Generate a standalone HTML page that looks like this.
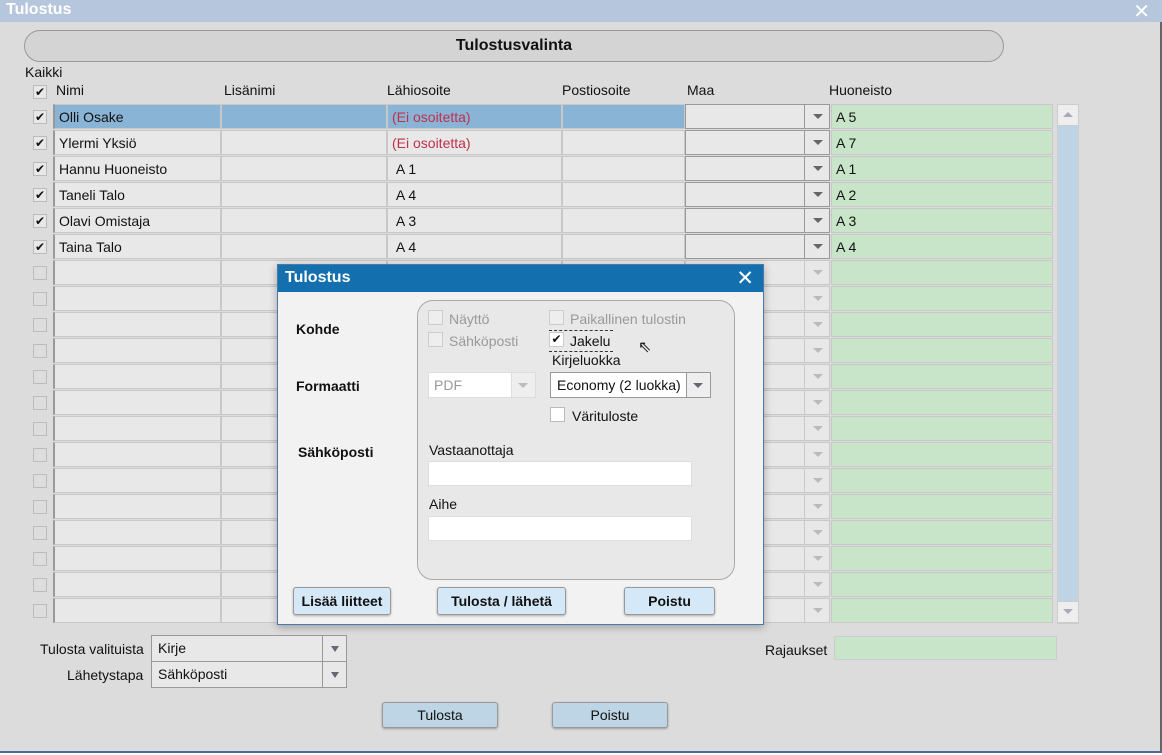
<!DOCTYPE html>
<html><head><meta charset="utf-8"><style>
*{box-sizing:border-box;margin:0;padding:0}
body{width:1162px;height:755px;overflow:hidden;background:#dcdcdc;font-family:"Liberation Sans",sans-serif;font-size:14px;color:#111;position:relative}
.a{position:absolute}
.tb{left:0;top:0;width:1162px;height:22px;background:#b6c6dc;color:#fff;font-weight:bold;font-size:16px;padding:0 6px;line-height:20px}
.r{position:absolute;left:0;width:1160px;height:26px}
.c{position:absolute;top:0;height:25px;background:#e8e8e8;border:1px solid #c8c8c8;line-height:25px;padding-left:4px;white-space:nowrap}
.n{left:53px;width:168px;border-left:2px solid #999}
.l{left:221px;width:166px}
.h{left:387px;width:175px}
.p{left:562px;width:123px}
.m{left:685px;width:145px;border:1px solid #999}
.m:after{content:"";position:absolute;right:0;top:0;width:24px;height:23px;border-left:1px solid #999}
.m i{position:absolute;right:6px;top:9px;border-left:5px solid transparent;border-right:5px solid transparent;border-top:5px solid #666;z-index:2}
.u{left:831px;width:222px;background:#c9e5c9;border-color:#c8c8c8}
.cb{position:absolute;left:33px;top:6px;width:14px;height:14px;border:1px solid #bbb;background:#e8e8e8;font-size:12px;line-height:12px;text-align:center}
.red{color:#c0304a}
.sel{background:#8ab4d6}
.e .m{border-color:#c8c8c8}.e .m:after{border-color:#c8c8c8}.e .m i{border-top-color:#bbb}
.e .cb{background:#ddd}
.btn{position:absolute;border:1px solid #999;border-radius:3px;text-align:center;box-shadow:0 1px 2px rgba(0,0,0,.3)}
.dlg{left:277px;top:264px;width:487px;height:361px;background:#f2f2f2;border:1px solid #4b79a9;box-shadow:0 2px 8px rgba(0,0,0,.3)}
.dh{left:0;top:0;width:485px;height:27px;background:#136fae;color:#fff;font-weight:bold;font-size:16px;padding-left:7px;line-height:26px}
.lb{font-weight:bold;font-size:14px}
.dcb{position:absolute;width:15px;height:15px;border:1px solid #ccc;background:#eee}
.gray{color:#999}
.inp{position:absolute;background:#fff;border:1px solid #ddd}
.db{background:#d5e8f8;font-weight:bold;font-size:14px;line-height:26px;height:28px}
</style></head><body>
<div class="a tb">Tulostus</div>
<div class="a" style="right:12px;top:-1px;color:#fff;font-size:20px">✕</div>
<div class="a" style="left:1160px;top:22px;width:2px;height:733px;background:#666"></div>
<div class="a" style="left:0;top:751px;width:1162px;height:4px;background:#fff;border-top:2px solid #4a6a9a"></div>
<div class="a" style="left:24px;top:30px;width:980px;height:32px;border:1px solid #999;border-radius:16px;background:#d4d4d4;text-align:center;font-weight:bold;font-size:16px;line-height:30px">Tulostusvalinta</div>
<div class="a" style="left:25px;top:64px">Kaikki</div>
<div class="cb" style="top:85px">✔</div>
<div class="a" style="left:56px;top:82px">Nimi</div>
<div class="a" style="left:224px;top:82px">Lisänimi</div>
<div class="a" style="left:387px;top:82px">Lähiosoite</div>
<div class="a" style="left:562px;top:82px">Postiosoite</div>
<div class="a" style="left:687px;top:82px">Maa</div>
<div class="a" style="left:829px;top:82px">Huoneisto</div>

<div class="r" style="top:104px"><div class="cb">✔</div><div class="c n sel">Olli Osake</div><div class="c l sel"></div><div class="c h sel red">(Ei osoitetta)</div><div class="c p sel"></div><div class="c m"><i></i></div><div class="c u">A 5</div></div>
<div class="r" style="top:130px"><div class="cb">✔</div><div class="c n">Ylermi Yksiö</div><div class="c l"></div><div class="c h red">(Ei osoitetta)</div><div class="c p"></div><div class="c m"><i></i></div><div class="c u">A 7</div></div>
<div class="r" style="top:156px"><div class="cb">✔</div><div class="c n">Hannu Huoneisto</div><div class="c l"></div><div class="c h">&nbsp;A 1</div><div class="c p"></div><div class="c m"><i></i></div><div class="c u">A 1</div></div>
<div class="r" style="top:182px"><div class="cb">✔</div><div class="c n">Taneli Talo</div><div class="c l"></div><div class="c h">&nbsp;A 4</div><div class="c p"></div><div class="c m"><i></i></div><div class="c u">A 2</div></div>
<div class="r" style="top:208px"><div class="cb">✔</div><div class="c n">Olavi Omistaja</div><div class="c l"></div><div class="c h">&nbsp;A 3</div><div class="c p"></div><div class="c m"><i></i></div><div class="c u">A 3</div></div>
<div class="r" style="top:234px"><div class="cb">✔</div><div class="c n">Taina Talo</div><div class="c l"></div><div class="c h">&nbsp;A 4</div><div class="c p"></div><div class="c m"><i></i></div><div class="c u">A 4</div></div>
<div class="r e" style="top:260px"><div class="cb"></div><div class="c n"></div><div class="c l"></div><div class="c h"></div><div class="c p"></div><div class="c m"><i></i></div><div class="c u"></div></div>
<div class="r e" style="top:286px"><div class="cb"></div><div class="c n"></div><div class="c l"></div><div class="c h"></div><div class="c p"></div><div class="c m"><i></i></div><div class="c u"></div></div>
<div class="r e" style="top:312px"><div class="cb"></div><div class="c n"></div><div class="c l"></div><div class="c h"></div><div class="c p"></div><div class="c m"><i></i></div><div class="c u"></div></div>
<div class="r e" style="top:338px"><div class="cb"></div><div class="c n"></div><div class="c l"></div><div class="c h"></div><div class="c p"></div><div class="c m"><i></i></div><div class="c u"></div></div>
<div class="r e" style="top:364px"><div class="cb"></div><div class="c n"></div><div class="c l"></div><div class="c h"></div><div class="c p"></div><div class="c m"><i></i></div><div class="c u"></div></div>
<div class="r e" style="top:390px"><div class="cb"></div><div class="c n"></div><div class="c l"></div><div class="c h"></div><div class="c p"></div><div class="c m"><i></i></div><div class="c u"></div></div>
<div class="r e" style="top:416px"><div class="cb"></div><div class="c n"></div><div class="c l"></div><div class="c h"></div><div class="c p"></div><div class="c m"><i></i></div><div class="c u"></div></div>
<div class="r e" style="top:442px"><div class="cb"></div><div class="c n"></div><div class="c l"></div><div class="c h"></div><div class="c p"></div><div class="c m"><i></i></div><div class="c u"></div></div>
<div class="r e" style="top:468px"><div class="cb"></div><div class="c n"></div><div class="c l"></div><div class="c h"></div><div class="c p"></div><div class="c m"><i></i></div><div class="c u"></div></div>
<div class="r e" style="top:494px"><div class="cb"></div><div class="c n"></div><div class="c l"></div><div class="c h"></div><div class="c p"></div><div class="c m"><i></i></div><div class="c u"></div></div>
<div class="r e" style="top:520px"><div class="cb"></div><div class="c n"></div><div class="c l"></div><div class="c h"></div><div class="c p"></div><div class="c m"><i></i></div><div class="c u"></div></div>
<div class="r e" style="top:546px"><div class="cb"></div><div class="c n"></div><div class="c l"></div><div class="c h"></div><div class="c p"></div><div class="c m"><i></i></div><div class="c u"></div></div>
<div class="r e" style="top:572px"><div class="cb"></div><div class="c n"></div><div class="c l"></div><div class="c h"></div><div class="c p"></div><div class="c m"><i></i></div><div class="c u"></div></div>
<div class="r e" style="top:598px"><div class="cb"></div><div class="c n"></div><div class="c l"></div><div class="c h"></div><div class="c p"></div><div class="c m"><i></i></div><div class="c u"></div></div>

<div class="a" style="left:1057px;top:104px;width:22px;height:520px;background:#bed4e4;border:1px solid #ccc"></div>
<div class="a" style="left:1057px;top:104px;width:22px;height:22px;background:#eee;border:1px solid #ccc"></div>
<div class="a" style="left:1063px;top:112px;border-left:5px solid transparent;border-right:5px solid transparent;border-bottom:5px solid #aab"></div>
<div class="a" style="left:1057px;top:601px;width:22px;height:22px;background:#eee;border:1px solid #ccc"></div>
<div class="a" style="left:1063px;top:609px;border-left:5px solid transparent;border-right:5px solid transparent;border-top:5px solid #aab"></div>

<div class="a" style="left:40px;top:641px">Tulosta valituista</div>
<div class="a" style="left:67px;top:667px">Lähetystapa</div>
<div class="a" style="left:151px;top:635px;width:196px;height:27px;background:#e8e8e8;border:1px solid #999;padding-left:6px;line-height:25px">Kirje<div class="a" style="right:0;top:0;width:24px;height:25px;border-left:1px solid #999"></div><div class="a" style="right:7px;top:10px;border-left:4px solid transparent;border-right:4px solid transparent;border-top:6px solid #667"></div></div>
<div class="a" style="left:151px;top:661px;width:196px;height:27px;background:#e8e8e8;border:1px solid #999;padding-left:6px;line-height:25px">Sähköposti<div class="a" style="right:0;top:0;width:24px;height:25px;border-left:1px solid #999"></div><div class="a" style="right:7px;top:10px;border-left:4px solid transparent;border-right:4px solid transparent;border-top:6px solid #667"></div></div>
<div class="a" style="left:765px;top:642px">Rajaukset</div>
<div class="a" style="left:834px;top:636px;width:223px;height:24px;background:#c9e5c9;border:1px solid #ccc"></div>
<div class="btn" style="left:382px;top:702px;width:116px;height:26px;background:#bdd5e4;line-height:25px">Tulosta</div>
<div class="btn" style="left:552px;top:702px;width:116px;height:26px;background:#bdd5e4;line-height:25px">Poistu</div>

<div class="a dlg">
<div class="a dh">Tulostus</div>
<div class="a" style="right:9px;top:1px;color:#fff;font-size:21px">✕</div>
<div class="a lb" style="left:18px;top:56px">Kohde</div>
<div class="a lb" style="left:18px;top:113px">Formaatti</div>
<div class="a lb" style="left:20px;top:179px">Sähköposti</div>
<div class="a" style="left:139px;top:35px;width:318px;height:280px;background:#e8e8e8;border:1px solid #aaa;border-radius:16px"></div>
<div class="dcb" style="left:150px;top:45px"></div><div class="a gray" style="left:171px;top:46px">Näyttö</div>
<div class="dcb" style="left:150px;top:67px"></div><div class="a gray" style="left:171px;top:68px">Sähköposti</div>
<div class="dcb" style="left:271px;top:45px"></div><div class="a gray" style="left:292px;top:46px">Paikallinen tulostin</div>
<div class="a" style="left:271px;top:65px;width:64px;height:22px;border-top:1px dashed #333;border-bottom:1px dashed #333"></div>
<div class="dcb" style="left:271px;top:67px;background:#fff;font-size:12px;line-height:12px;text-align:center">✔</div><div class="a" style="left:292px;top:68px">Jakelu</div>
<div class="a" style="left:274px;top:87px">Kirjeluokka</div>
<div class="a" style="left:360px;top:72px;font-size:16px">⇖</div>
<div class="a" style="left:150px;top:107px;width:108px;height:26px;background:#fff;border:1px solid #ddd;color:#999;padding-left:5px;line-height:24px">PDF<div class="a" style="right:0;top:0;width:24px;height:24px;border-left:1px solid #ddd;background:#eee"></div><div class="a" style="right:7px;top:10px;border-left:5px solid transparent;border-right:5px solid transparent;border-top:5px solid #bbb"></div></div>
<div class="a" style="left:272px;top:107px;width:161px;height:26px;background:#fff;border:1px solid #999;padding-left:6px;line-height:24px">Economy (2 luokka)<div class="a" style="right:0;top:0;width:24px;height:24px;border-left:1px solid #999;background:#eee"></div><div class="a" style="right:7px;top:10px;border-left:5px solid transparent;border-right:5px solid transparent;border-top:5px solid #667"></div></div>
<div class="dcb" style="left:272px;top:142px;background:#fff;border-color:#bbb"></div><div class="a" style="left:294px;top:143px">Värituloste</div>
<div class="a" style="left:151px;top:177px">Vastaanottaja</div>
<div class="inp" style="left:150px;top:196px;width:264px;height:25px"></div>
<div class="a" style="left:151px;top:231px">Aihe</div>
<div class="inp" style="left:150px;top:251px;width:264px;height:25px"></div>
<div class="btn db" style="left:15px;top:322px;width:98px">Lisää liitteet</div>
<div class="btn db" style="left:159px;top:322px;width:129px">Tulosta / lähetä</div>
<div class="btn db" style="left:346px;top:322px;width:91px">Poistu</div>
</div>
</body></html>
